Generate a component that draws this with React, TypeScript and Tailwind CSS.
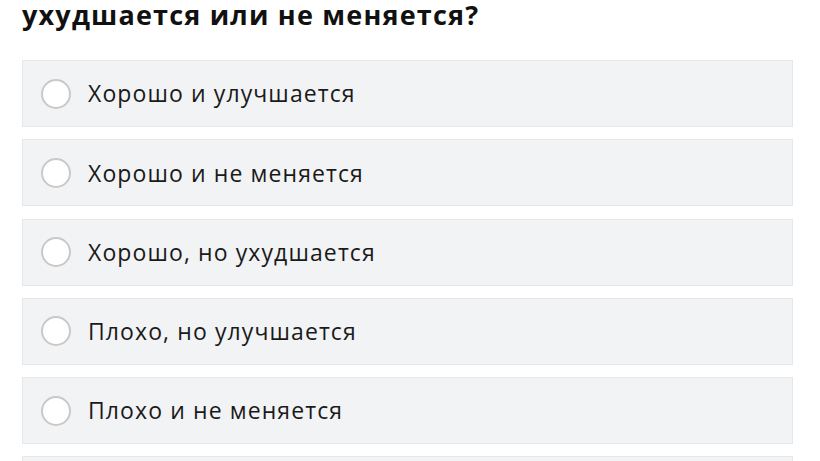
import React from 'react';

const OPTIONS = [
  'Хорошо и улучшается',
  'Хорошо и не меняется',
  'Хорошо, но ухудшается',
  'Плохо, но улучшается',
  'Плохо и не меняется',
  'Плохо и ухудшается',
];

const App: React.FC = () => {
  return (
    <div className="w-[820px] h-[461px] overflow-hidden bg-white font-['Open_Sans',sans-serif]">
      <div className="px-[22px] pr-[27px]">
        <h2 className="-mt-[7px] text-[27px] leading-[44px] font-bold text-[#111] tracking-[1.2px]">
          ухудшается или не меняется?
        </h2>
        <div className="mt-[23px] flex flex-col gap-[12.3px]">
          {OPTIONS.map((opt, i) => (
            <label
              key={i}
              className="flex items-center h-[67px] bg-[#f2f3f5] border border-[#e6e7ea] px-[18px]"
            >
              <span className="w-[30px] h-[30px] rounded-full bg-white border-2 border-[#c9c9c9] flex-shrink-0" />
              <span className="ml-[17px] text-[23px] text-[#1a1a1a] tracking-[1.1px]">{opt}</span>
            </label>
          ))}
        </div>
      </div>
    </div>
  );
};

export default App;
